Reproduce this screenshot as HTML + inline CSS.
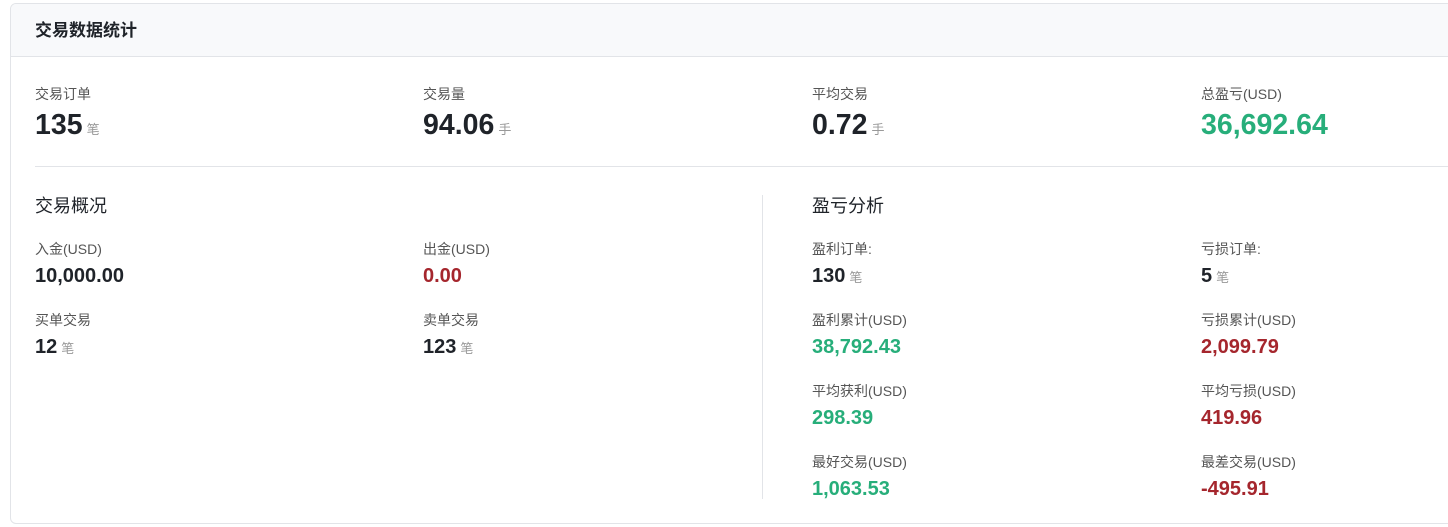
<!DOCTYPE html>
<html><head><meta charset="utf-8"><style>
*{margin:0;padding:0;box-sizing:border-box}
body{width:1448px;height:527px;background:#fff;font-family:"Liberation Sans","Noto Sans CJK SC",sans-serif;position:relative;overflow:hidden}
.card{position:absolute;left:10px;top:3px;width:1460px;height:521px;border:1px solid #e2e4e8;border-radius:6px;overflow:hidden}
.hd{position:absolute;left:0;top:0;right:0;height:53px;background:#f8f9fb;border-bottom:1px solid #e2e4e8}
.hd span{position:absolute;left:24px;top:12px;font-size:17px;font-weight:bold;color:#1f2329}
.a{position:absolute;white-space:nowrap}
.lb{font-size:14px;color:#555}
.big{font-size:28.5px;font-weight:bold;color:#1f2329}
.v{font-size:20px;font-weight:bold;color:#1f2329}
.u{font-size:13px;color:#999;font-weight:normal;margin-left:4px}
.sec{font-size:18px;color:#1f2329}
.g{color:#27ae7a}.r{color:#a5262d}
</style></head><body>
<div class="card"><div class="hd"><span>交易数据统计</span></div></div>
<div class="a lb" style="left:35px;top:84px">交易订单</div>
<div class="a big" style="left:35px;top:109px">135<span class="u">笔</span></div>
<div class="a lb" style="left:423px;top:84px">交易量</div>
<div class="a big" style="left:423px;top:109px">94.06<span class="u">手</span></div>
<div class="a lb" style="left:812px;top:84px">平均交易</div>
<div class="a big" style="left:812px;top:109px">0.72<span class="u">手</span></div>
<div class="a lb" style="left:1201px;top:84px">总盈亏(USD)</div>
<div class="a big g" style="left:1201px;top:109px">36,692.64</div>
<div class="a" style="left:35px;top:166px;width:1420px;height:1px;background:#e2e4e8"></div>
<div class="a" style="left:762px;top:195px;width:1px;height:304px;background:#e2e4e8"></div>

<div class="a sec" style="left:35px;top:192px">交易概况</div>
<div class="a lb" style="left:35px;top:239px">入金(USD)</div>
<div class="a v" style="left:35px;top:265px">10,000.00</div>
<div class="a lb" style="left:423px;top:239px">出金(USD)</div>
<div class="a v r" style="left:423px;top:265px">0.00</div>
<div class="a lb" style="left:35px;top:310px">买单交易</div>
<div class="a v" style="left:35px;top:336px">12<span class="u">笔</span></div>
<div class="a lb" style="left:423px;top:310px">卖单交易</div>
<div class="a v" style="left:423px;top:336px">123<span class="u">笔</span></div>

<div class="a sec" style="left:812px;top:192px">盈亏分析</div>
<div class="a lb" style="left:812px;top:239px">盈利订单:</div>
<div class="a v" style="left:812px;top:265px">130<span class="u">笔</span></div>
<div class="a lb" style="left:1201px;top:239px">亏损订单:</div>
<div class="a v" style="left:1201px;top:265px">5<span class="u">笔</span></div>
<div class="a lb" style="left:812px;top:310px">盈利累计(USD)</div>
<div class="a v g" style="left:812px;top:336px">38,792.43</div>
<div class="a lb" style="left:1201px;top:310px">亏损累计(USD)</div>
<div class="a v r" style="left:1201px;top:336px">2,099.79</div>
<div class="a lb" style="left:812px;top:381px">平均获利(USD)</div>
<div class="a v g" style="left:812px;top:407px">298.39</div>
<div class="a lb" style="left:1201px;top:381px">平均亏损(USD)</div>
<div class="a v r" style="left:1201px;top:407px">419.96</div>
<div class="a lb" style="left:812px;top:452px">最好交易(USD)</div>
<div class="a v g" style="left:812px;top:478px">1,063.53</div>
<div class="a lb" style="left:1201px;top:452px">最差交易(USD)</div>
<div class="a v r" style="left:1201px;top:478px">-495.91</div>
</body></html>
